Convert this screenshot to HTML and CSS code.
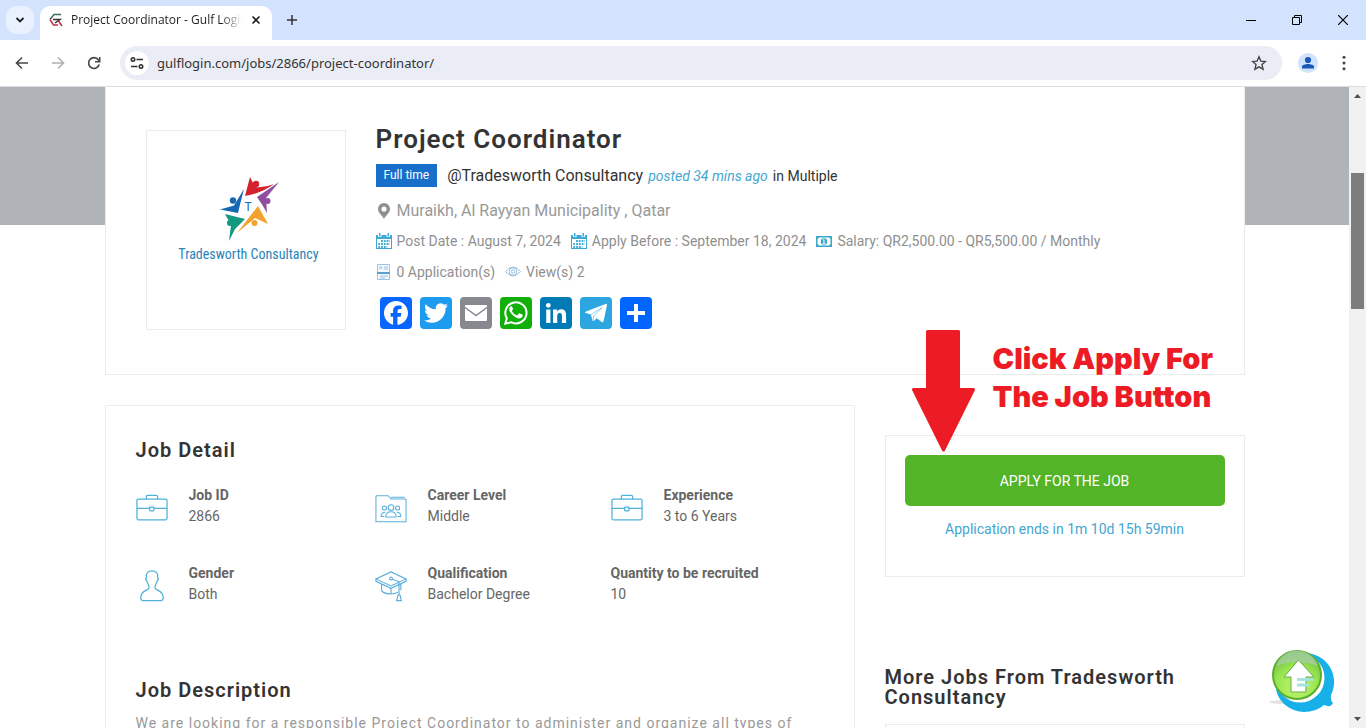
FILE: index.html
```html
<!DOCTYPE html>
<html lang="en">
<head>
    <meta charset="UTF-8">
    <meta name="viewport" content="width=device-width, initial-scale=1.0">
    <title>Project Coordinator - Gulf Login</title>
    <link rel="stylesheet" href="styles.css">
</head>
<body>
    <!-- shared icons -->
    <svg class="sprite" aria-hidden="true">
        <symbol id="briefcase" viewBox="0 0 34 34">
            <g fill="none" stroke="#4fb0d9" stroke-width="1.3">
                <rect x="1" y="7.500" width="32" height="22" rx="1.500"/>
                <path d="M11 7.500V5q0-1.500 1.500-1.500h9Q23 3.500 23 5v2.500M1 17.500h13.500M19 17.500h14"/>
                <rect x="14.500" y="16" width="4.500" height="4" rx=".5"/>
            </g>
        </symbol>
        <symbol id="calendar" viewBox="0 0 16 16">
            <path fill="#3aa9d8" d="M0 2h16v14H0z"/>
            <path fill="#fff" d="M1 6h14v9H1zM2 1.500h3.500V4H2zM10.500 1.500H14V4h-3.500z"/>
            <path fill="#3aa9d8" d="M3 0h1.500v3.500H3zM11.500 0H13v3.500h-1.500z"/>
            <path stroke="#3aa9d8" stroke-width="2" stroke-dasharray="1.800 1" d="M5 8h9M2.300 11h11.500M2.300 14h9"/>
        </symbol>
    </svg>

    <div class="window">
        <div class="titlebar">
            <button class="tab-search" aria-label="Search tabs">
                <svg width="10" height="10" viewBox="0 0 10 10"><path d="M1.500 3L5 6.500 8.500 3" fill="none" stroke="#1f1f1f" stroke-width="1.800"/></svg>
            </button>
            <div class="tab">
                <svg width="14" height="14" viewBox="0 0 14 14" fill="none" stroke-width="1.500">
                    <path d="M12 1.500H5L1 6.500" stroke="#3f6b5a"/>
                    <path d="M1 6.500L4.500 12H9" stroke="#c0324b"/>
                    <path d="M4 6.500h7l-5 3.500" stroke="#333"/>
                    <path d="M9.500 8l3.500 5" stroke="#c0324b"/>
                </svg>
                <span class="tab-title">Project Coordinator - Gulf Login</span>
                <button class="tab-close" aria-label="Close tab">
                    <svg width="10" height="10" viewBox="0 0 10 10"><path d="M1.500 1.500l7 7M8.500 1.500l-7 7" stroke="#1f1f1f" stroke-width="1.600"/></svg>
                </button>
            </div>
            <button class="new-tab" aria-label="New tab">
                <svg width="12" height="12" viewBox="0 0 12 12"><path d="M6 1v10M1 6h10" stroke="#333" stroke-width="1.500"/></svg>
            </button>
            <div class="window-buttons">
                <button aria-label="Minimize"><svg width="10" height="10" viewBox="0 0 10 10"><path d="M0 5.500h10" stroke="#000"/></svg></button>
                <button aria-label="Restore"><svg width="10" height="10" viewBox="0 0 10 10"><path d="M.5 2.500h7v7h-7zM2.500 2.500v-2h7v7h-2" fill="none" stroke="#000"/></svg></button>
                <button aria-label="Close"><svg width="10" height="10" viewBox="0 0 10 10"><path d="M0 0l10 10M10 0L0 10" stroke="#000" stroke-width="1.200"/></svg></button>
            </div>
        </div>

        <div class="toolbar">
            <button aria-label="Back"><svg width="16" height="16" viewBox="0 0 16 16"><path d="M14 8H3M8 2.500L2.500 8 8 13.500" fill="none" stroke="#474747" stroke-width="1.600"/></svg></button>
            <button aria-label="Forward"><svg width="16" height="16" viewBox="0 0 16 16"><path d="M2 8h11M8 2.500L13.500 8 8 13.500" fill="none" stroke="#b0b0b0" stroke-width="1.600"/></svg></button>
            <button aria-label="Reload"><svg width="16" height="16" viewBox="0 0 16 16"><path d="M13.200 9.500A5.400 5.400 0 1 1 12.300 4.800L13.500 6.200" fill="none" stroke="#474747" stroke-width="1.700"/><path d="M13.700 2v4.700H9" fill="none" stroke="#474747" stroke-width="1.600"/></svg></button>
            <div class="omnibox">
                <button class="site-info" aria-label="Site information">
                    <svg width="14" height="14" viewBox="0 0 14 14" fill="none" stroke="#303030" stroke-width="1.600"><circle cx="3" cy="3.500" r="1.700"/><path d="M6.500 3.500H13M1 10.500h6.500"/><circle cx="11" cy="10.500" r="1.700"/></svg>
                </button>
                <input class="url" type="text" aria-label="Address" value="gulflogin.com/jobs/2866/project-coordinator/">
                <button class="bookmark" aria-label="Bookmark">
                    <svg width="16" height="16" viewBox="0 0 16 16"><path d="M8 1.800l1.900 4.300 4.600.4-3.500 3.100 1.100 4.600L8 11.800l-4.100 2.400L5 9.600 1.500 6.500l4.600-.4z" fill="none" stroke="#474747" stroke-width="1.400"/></svg>
                </button>
            </div>
            <button class="profile" aria-label="Profile"><svg width="20" height="20" viewBox="0 0 20 20"><circle cx="10" cy="10" r="10" fill="#d0e2fb"/><circle cx="10" cy="7" r="3.100" fill="#1757b8"/><path d="M4 15.500v-1.800c0-1.700 3.500-2.700 6-2.700s6 1 6 2.700v1.800z" fill="#1757b8"/></svg></button>
            <button class="menu" aria-label="Menu"><svg width="4" height="16" viewBox="0 0 4 16" fill="#474747"><circle cx="2" cy="2.300" r="1.500"/><circle cx="2" cy="8" r="1.500"/><circle cx="2" cy="13.700" r="1.500"/></svg></button>
        </div>

        <div class="viewport">
            <div class="page">
                <div class="container">
                    <header class="job-header">
                        <div class="logo">
                            <svg width="62" height="66" viewBox="-1 0 62 66">
                                <path fill="#d3222e" d="M31 0l5 10q10 1 19-3-12 9-29 12z"/><circle cx="37" cy="7" r="3.200" fill="#d3222e"/>
                                <path fill="#8f4f9f" d="M60 5L47 21l1 15q-5-9-10-16z"/><circle cx="48.500" cy="24" r="3" fill="#8f4f9f"/>
                                <path fill="#1668b3" d="M25 12q-3 11-6 24L1 32.500l14-4z"/><circle cx="14" cy="23.500" r="3.200" fill="#1668b3"/>
                                <path fill="#12997f" d="M6 37l20 5-10 10L10 64l2-16z"/><circle cx="11" cy="46" r="3" fill="#12997f"/>
                                <path fill="#f3a22e" d="M39 29l10 18-13-6-18 15z"/><circle cx="35.500" cy="46" r="3" fill="#f3a22e"/>
                                <text x="29" y="34" class="logo-letter">T</text>
                            </svg>
                            <span class="logo-name">Tradesworth Consultancy</span>
                        </div>
                        <div class="job-info">
                            <h1>Project Coordinator</h1>
                            <div class="job-type">
                                <span class="badge">Full time</span>
                                <a href="#" class="company">@Tradesworth Consultancy</a>
                                <em>posted 34 mins ago</em>
                                <span>in Multiple</span>
                            </div>
                            <div class="location">
                                <svg width="16" height="16" viewBox="0 0 16 16"><path fill="#8f8f8f" fill-rule="evenodd" d="M8 0a6 6 0 0 1 6 6c0 4-4 6-6 10C6 12 2 10 2 6a6 6 0 0 1 6-6zm0 3.400a2.600 2.600 0 1 0 0 5.200 2.600 2.600 0 0 0 0-5.200z"/></svg>
                                <span>Muraikh, Al Rayyan Municipality , Qatar</span>
                            </div>
                            <ul class="meta">
                                <li><svg width="16" height="16"><use href="#calendar"/></svg>Post Date : August 7, 2024</li>
                                <li><svg width="16" height="16"><use href="#calendar"/></svg>Apply Before : September 18, 2024</li>
                                <li>
                                    <svg width="16" height="16" viewBox="0 0 16 16"><path fill="#3aa9c9" d="M0 3h16v11H0z"/><path fill="#fff" d="M3 4.500h10l1.500 1.500v5L13 12.500H3L1.500 11V6z"/><circle cx="8" cy="8.500" r="3.200" fill="#3aa9c9"/><path d="M8 6.500v4M7 10.500h2M7 7.200l1-.7" stroke="#fff" fill="none"/></svg>Salary: QR2,500.00 - QR5,500.00 / Monthly
                                </li>
                            </ul>
                            <ul class="meta">
                                <li>
                                    <svg width="16" height="16" viewBox="0 0 16 16" fill="none" stroke="#9fc3e0"><path d="M1.500.5h12v15h-12z" fill="#f3f8fc"/><path d="M3.500 5l1-3L6 5M8 3h4M8 5h4M4 12h8M4 14h5"/><path d="M1 9h13" stroke="#5c9fd0" stroke-width="2"/></svg>0 Application(s)
                                </li>
                                <li>
                                    <svg width="16" height="16" viewBox="0 0 16 16" fill="none" stroke="#93bedd"><path d="M.5 7.500Q8-1.500 15.500 7.500 8 16.500.5 7.500z"/><circle cx="8" cy="7.500" r="3.800"/><circle cx="8" cy="7.500" r="1.700"/></svg>View(s) 2
                                </li>
                            </ul>
                            <div class="share">
                                <a href="#" class="facebook" aria-label="Facebook"><svg viewBox="0 0 32 32"><path fill="#fff" d="M28 16c0-6.627-5.373-12-12-12S4 9.373 4 16c0 5.628 3.875 10.350 9.101 11.647v-7.980h-2.474V16H13.100v-1.580c0-4.085 1.849-5.978 5.859-5.978.76 0 2.072.15 2.608.298v3.325c-.283-.03-.775-.045-1.386-.045-1.967 0-2.728.745-2.728 2.683V16h3.920l-.673 3.667h-3.247v8.245C23.395 27.195 28 22.135 28 16"/></svg></a>
                                <a href="#" class="twitter" aria-label="Twitter"><svg viewBox="0 0 32 32"><path fill="#fff" d="M28 8.557a10 10 0 0 1-2.828.775 4.930 4.930 0 0 0 2.166-2.725 9.700 9.700 0 0 1-3.130 1.194 4.920 4.920 0 0 0-3.593-1.550 4.924 4.924 0 0 0-4.794 6.049c-4.090-.21-7.720-2.170-10.150-5.150a4.940 4.940 0 0 0-.665 2.477c0 1.710.870 3.214 2.190 4.100a5 5 0 0 1-2.230-.616v.060c0 2.390 1.700 4.380 3.952 4.830-.414.115-.850.174-1.297.174q-.476-.001-.928-.086a4.935 4.935 0 0 0 4.600 3.420 9.900 9.900 0 0 1-6.114 2.107q-.597 0-1.175-.067a13.950 13.950 0 0 0 7.550 2.213c9.056 0 14.010-7.507 14.010-14.013q0-.320-.015-.637c.960-.695 1.795-1.560 2.455-2.550z"/></svg></a>
                                <a href="#" class="email" aria-label="Email"><svg viewBox="0 0 32 32"><path fill="#fff" d="M5 9q0-1 1-1h20q1 0 1 1v14q0 1-1 1H6q-1 0-1-1z"/><path d="M5 10.500l11 8 11-8" fill="none" stroke="#888990" stroke-width="1.500"/></svg></a>
                                <a href="#" class="whatsapp" aria-label="WhatsApp"><svg viewBox="0 0 32 32"><path fill="none" stroke="#fff" stroke-width="2" d="M5.300 26.700l1.500-5.500A10.600 10.600 0 1 1 11 25.200z"/><path fill="#fff" d="M12.100 9.800c-.3-.6-.5-.6-1-.6-.6 0-1.900.9-1.900 3 0 1.500 1 3.100 2.500 4.800 2.200 2.500 4.600 4.200 7.200 4.500 1.700.2 3.200-1 3.500-1.900.3-.8.3-1.600.1-1.800-.4-.4-2.700-1.400-3.100-1.500-.3 0-.5.1-.8.400l-1.200 1.500c-.2.200-.5.200-.8.100-2-.9-3.600-2.300-4.600-4.100-.2-.3 0-.5.100-.7l.8-1c.2-.2.2-.5.100-.8z"/></svg></a>
                                <a href="#" class="linkedin" aria-label="LinkedIn"><svg viewBox="0 0 32 32"><path fill="#fff" d="M6.227 12.610h4.190v13.480h-4.190zm2.095-6.700a2.430 2.430 0 0 1 0 4.860c-1.344 0-2.428-1.090-2.428-2.430s1.084-2.430 2.428-2.430m4.720 6.700h4.020v1.840h.058c.560-1.058 1.927-2.176 3.965-2.176 4.238 0 5.020 2.792 5.020 6.420v7.395h-4.183v-6.560c0-1.564-.030-3.574-2.178-3.574-2.180 0-2.514 1.700-2.514 3.460v6.668h-4.187z"/></svg></a>
                                <a href="#" class="telegram" aria-label="Telegram"><svg viewBox="0 0 32 32"><path fill="#fff" d="M25.515 6.896 6.027 14.410c-1.330.534-1.322 1.276-.243 1.606l5 1.560 1.720 5.660c.226.625.115.873.770.873.506 0 .730-.235 1.012-.510l2.430-2.363 5.056 3.734c.930.514 1.602.250 1.834-.863l3.320-15.638c.338-1.363-.520-1.980-1.410-1.577z"/><path d="M10.800 17.700l11.500-7.300-8.600 8.500-.5 4.500" fill="none" stroke="#2ca5e0" stroke-width=".5"/></svg></a>
                                <a href="#" class="more" aria-label="Share"><svg viewBox="0 0 32 32"><path d="M16 7v18M7 16h18" stroke="#fff" stroke-width="4"/></svg></a>
                            </div>
                        </div>
                    </header>

                    <div class="columns">
                        <main class="job-card">
                            <h2>Job Detail</h2>
                            <ul class="details">
                                <li>
                                    <svg width="32" height="32"><use href="#briefcase"/></svg>
                                    <div><b>Job ID</b><span>2866</span></div>
                                </li>
                                <li>
                                    <svg width="32" height="32" viewBox="0 0 34 34" fill="none" stroke="#5aaedb" stroke-width="1.100">
                                        <path d="M1 31.500V5q0-1 1-1h12l3 3.500h15q1 0 1 1v23zM17 5.500h14.500"/>
                                        <circle cx="17" cy="16.500" r="3"/><circle cx="10" cy="17" r="2.200"/><circle cx="24" cy="17" r="2.200"/>
                                        <path d="M11.500 26.500q0-5.500 5.500-5.500t5.500 5.500zM10 26H6.500q0-4.500 4.500-4.500M24 26h3.500q0-4.500-4.500-4.500"/>
                                    </svg>
                                    <div><b>Career Level</b><span>Middle</span></div>
                                </li>
                                <li>
                                    <svg width="32" height="32"><use href="#briefcase"/></svg>
                                    <div><b>Experience</b><span>3 to 6 Years</span></div>
                                </li>
                                <li>
                                    <svg width="32" height="32" viewBox="0 0 34 34" fill="none" stroke="#4fb0d9" stroke-width="1.300">
                                        <path d="M17 1c4.500 0 6.500 2.500 6 7 1.200 1.500 0 3.500-.5 4-1 3-2.500 4.500-2.500 6.500 0 3.500 9 2.500 9 11 0 2-1 3-3 3H8c-2 0-3-1-3-3 0-8.500 9-7.500 9-11 0-2-1.500-3.500-2.500-6.500-.5-.5-1.700-2.500-.5-4-.5-4.500 1.500-7 6-7z"/>
                                    </svg>
                                    <div><b>Gender</b><span>Both</span></div>
                                </li>
                                <li>
                                    <svg width="32" height="32" viewBox="0 0 34 34" fill="none" stroke="#5aaedb" stroke-width="1.200">
                                        <path d="M17 2L1 9.500 17 17l16-7.500zM1 9.500V12l16 7.500L33 12V9.500M7 15v6.500q1 3.500 10 4 5 0 7.500-2M27.500 14.500v7"/>
                                        <circle cx="17" cy="9" r="1.500"/>
                                        <path d="M18 9.500l7.500 3v14M24.500 26.500l-1.500 6h5l-1.500-6zM17 19.500v6"/>
                                    </svg>
                                    <div><b>Qualification</b><span>Bachelor Degree</span></div>
                                </li>
                                <li>
                                    <div><b>Quantity to be recruited</b><span>10</span></div>
                                </li>
                            </ul>
                            <h2>Job Description</h2>
                            <p class="description">We are looking for a responsible Project Coordinator to administer and organize all types of</p>
                        </main>

                        <aside class="sidebar">
                            <div class="hint">
                                <svg width="64" height="122" viewBox="0 0 64 122"><path fill="#ed1c24" stroke="#ed1c24" stroke-width="3" stroke-linejoin="round" d="M15.500 1.500h31v58h15L31.500 120 1.500 59.500h14z"/></svg>
                                <p>Click Apply For<br>The Job Button</p>
                            </div>
                            <div class="apply-card">
                                <button class="apply">APPLY FOR THE JOB</button>
                                <p>Application ends in 1m 10d 15h 59min</p>
                            </div>
                            <h2>More Jobs From Tradesworth Consultancy</h2>
                            <div class="more-jobs"></div>
                        </aside>
                    </div>
                </div>

                <button class="to-top" aria-label="Back to top">
                    <svg width="70" height="66" viewBox="0 0 70 66">
                        <defs>
                            <radialGradient id="green" cx="50%" cy="75%" r="65%">
                                <stop offset="0" stop-color="#c2f56e"/>
                                <stop offset=".65" stop-color="#98e650"/>
                                <stop offset="1" stop-color="#7cc84a"/>
                            </radialGradient>
                        </defs>
                        <ellipse cx="28" cy="54" rx="28" ry="2.500" fill="#e3e3e3"/>
                        <path fill="#18b0e8" d="M36 5a29 29 0 0 1 26 42q-1 5 2 8-2 5-9 2-8 7-20 7A29 29 0 0 1 7 42z"/>
                        <circle cx="31" cy="30" r="24.500" fill="#fff"/>
                        <circle cx="28" cy="27" r="24" fill="url(#green)" stroke="#5cad2c" stroke-width="2"/>
                        <path fill="#a9cfae" opacity=".7" d="M7 18a22 22 0 0 1 42 0Q28 10 7 18z"/>
                        <path fill="#fff" stroke="#6cab4a" d="M29.500 12L15 29h7v15h15V29h8z"/>
                        <path stroke="#a5e3df" stroke-width="3" d="M28 31.500h17M28 37h13"/>
                    </svg>
                </button>
            </div>

            <div class="scrollbar">
                <svg width="7" height="4" viewBox="0 0 7 4"><path d="M0 4L3.500 0 7 4z" fill="#505050"/></svg>
                <div class="track"><div class="thumb"></div></div>
                <svg width="7" height="4" viewBox="0 0 7 4"><path d="M0 0h7L3.500 4z" fill="#505050"/></svg>
            </div>
        </div>
    </div>
</body>
</html>
```
FILE: styles.css
```css
* {
    box-sizing: border-box;
}
body {
    margin: 0;
    background-color: #fff;
    color: #666;
    font-family: Roboto, sans-serif;
    font-size: 14px;
    line-height: 20px;
}
ul {
    list-style: none;
    margin: 0;
    padding: 0;
}
p {
    margin: 0;
}
a {
    text-decoration: none;
}
svg {
    display: block;
    flex-shrink: 0;
}
button {
    display: flex;
    align-items: center;
    justify-content: center;
    border: 0;
    padding: 0;
    background: none;
    cursor: pointer;
}
.sprite {
    position: absolute;
    width: 0;
    height: 0;
}
.window {
    display: flex;
    flex-direction: column;
    height: 100vh;
    overflow: hidden;
}

/* browser frame */
.titlebar {
    display: flex;
    align-items: flex-end;
    height: 40px;
    flex-shrink: 0;
    padding-left: 6px;
    background-color: #d3e2fd;
}
.tab-search {
    width: 28px;
    height: 28px;
    margin-bottom: 6px;
    border-radius: 10px;
    background-color: #eaf1fe;
}
.tab {
    display: flex;
    align-items: center;
    gap: 8px;
    width: 232px;
    height: 34px;
    margin-left: 6px;
    padding: 0 10px 6px 9px;
    border-radius: 10px 10px 0 0;
    background-color: #fff;
}
.tab-title {
    flex: 1;
    overflow: hidden;
    white-space: nowrap;
    color: #1f1f1f;
    font-family: "Open Sans", sans-serif;
    font-size: 12px;
    mask-image: linear-gradient(to right, #000 88%, transparent);
}
.tab-close {
    width: 12px;
    height: 20px;
}
.new-tab {
    width: 28px;
    height: 28px;
    margin: 0 0 6px 6px;
}
.window-buttons {
    display: flex;
    align-self: stretch;
    margin-left: auto;
}
.window-buttons button {
    width: 46px;
    height: 40px;
}
.toolbar {
    display: flex;
    align-items: center;
    gap: 8px;
    height: 47px;
    flex-shrink: 0;
    padding: 0 14px 0 8px;
    border-bottom: 1px solid #dcdde0;
    background-color: #fff;
}
.toolbar > button {
    width: 28px;
    height: 28px;
}
.omnibox {
    display: flex;
    align-items: center;
    flex: 1;
    height: 34px;
    margin: 0 4px;
    padding: 0 15px 0 5px;
    border-radius: 17px;
    background-color: #eaedf6;
}
.site-info {
    width: 24px;
    height: 24px;
    border-radius: 50%;
    background-color: #fff;
}
.url {
    flex: 1;
    min-width: 0;
    padding: 0 8px;
    border: 0;
    background: none;
    color: #333;
    font-family: "Noto Sans", sans-serif;
    font-size: 13px;
}
.toolbar .menu {
    width: 16px;
    margin-left: 6px;
}

/* page */
.viewport {
    display: flex;
    flex: 1;
    min-height: 0;
}
.page {
    position: relative;
    flex: 1;
    overflow: hidden;
    background: linear-gradient(#b0b3b7, #b0b3b7) no-repeat top / 100% 138px;
}
.container {
    max-width: 1140px;
    margin: 0 auto;
}
.job-header {
    display: flex;
    gap: 30px;
    padding: 43px 40px 44px;
    border: 1px solid #ececec;
    border-top: 0;
    background-color: #fff;
}
.logo {
    display: flex;
    flex-direction: column;
    align-items: center;
    gap: 2px;
    width: 200px;
    height: 200px;
    flex-shrink: 0;
    padding: 46px 0 0 6px;
    border: 1px solid #ececec;
}
.logo svg {
    overflow: visible;
}
.logo-letter {
    fill: #1668b3;
    font-size: 12px;
    text-anchor: middle;
}
.logo-name {
    color: #2b83b8;
    font-family: "Roboto Condensed", Roboto, sans-serif;
    font-size: 14px;
    line-height: 18px;
}
h1 {
    margin: 0 0 10px;
    color: #333;
    font-size: 26px;
    font-weight: 600;
    line-height: 30px;
    letter-spacing: 1px;
}
h2 {
    margin: 0;
    color: #333;
    font-size: 20px;
    font-weight: 600;
    line-height: 20px;
    letter-spacing: 1px;
}
.job-info {
    margin-top: -6px;
}
.job-type {
    display: flex;
    align-items: center;
    gap: 5px;
    color: #333;
}
.badge {
    margin-right: 5px;
    padding: 1px 8px 2px;
    background-color: #186fc9;
    color: #fff;
    font-size: 12px;
}
.company {
    color: #333;
    font-size: 16px;
}
.job-type em {
    color: #44a6d2;
}
.location {
    display: flex;
    align-items: center;
    gap: 5px;
    margin: 14px 0 10px;
    color: #999;
    font-size: 16px;
}
.meta {
    display: flex;
    flex-wrap: wrap;
    gap: 10px;
    margin-bottom: 11px;
    color: #8f8f8f;
}
.meta li {
    display: flex;
    align-items: center;
    gap: 5px;
}
.share {
    display: flex;
    gap: 8px;
    padding: 4px 4px 0;
}
.share a {
    width: 32px;
    height: 32px;
    border-radius: 4px;
}
.facebook {
    background-color: #0866ff;
}
.twitter {
    background-color: #1d9bf0;
}
.email {
    background-color: #888990;
}
.whatsapp {
    background-color: #12af0a;
}
.linkedin {
    background-color: #007bb5;
}
.telegram {
    background-color: #2ca5e0;
}
.more {
    background-color: #0166ff;
}
.columns {
    display: grid;
    grid-template-columns: minmax(0, 1fr) 360px;
    gap: 30px;
    margin-top: 30px;
}
.job-card {
    padding: 34px 30px;
    border: 1px solid #ececec;
}
.details {
    display: grid;
    grid-template-columns: 239px 236px 1fr;
    row-gap: 36px;
    margin: 25px 0 75px;
}
.details li {
    display: flex;
    align-items: center;
    gap: 21px;
}
.details b,
.details span {
    display: block;
    line-height: 21px;
}
.details svg {
    margin-top: 4px;
}
.description {
    margin-top: 13px;
    color: #999;
    letter-spacing: 1px;
}
.sidebar {
    position: relative;
    padding-top: 30px;
}
.hint {
    position: absolute;
    top: -75px;
    left: 27px;
    display: flex;
    align-items: flex-start;
    gap: 17px;
}
.hint p {
    padding-top: 10px;
    color: #ed1c24;
    font-family: "Arial Black", Inter, sans-serif;
    font-size: 29px;
    font-weight: 900;
    line-height: 38px;
    white-space: nowrap;
}
.apply-card {
    padding: 19px 19px 37px;
    margin-bottom: 90px;
    border: 1px solid #ececec;
    text-align: center;
}
.apply {
    width: 100%;
    height: 51px;
    border-radius: 5px;
    background-color: #53b427;
    color: #fff;
    font-family: Roboto, sans-serif;
    font-size: 14px;
}
.apply-card p {
    margin-top: 13px;
    color: #44a6d2;
}
.more-jobs {
    height: 100px;
    margin-top: 17px;
    border: 1px solid #ececec;
}
.to-top {
    position: absolute;
    right: 10px;
    bottom: 14px;
}

/* scrollbar */
.scrollbar {
    display: flex;
    flex-direction: column;
    align-items: center;
    width: 17px;
    padding: 7px 0;
    background-color: #f1f1f1;
}
.track {
    flex: 1;
    width: 13px;
    padding-top: 75px;
}
.thumb {
    height: 25%;
    background-color: #7d7d7d;
}
```
